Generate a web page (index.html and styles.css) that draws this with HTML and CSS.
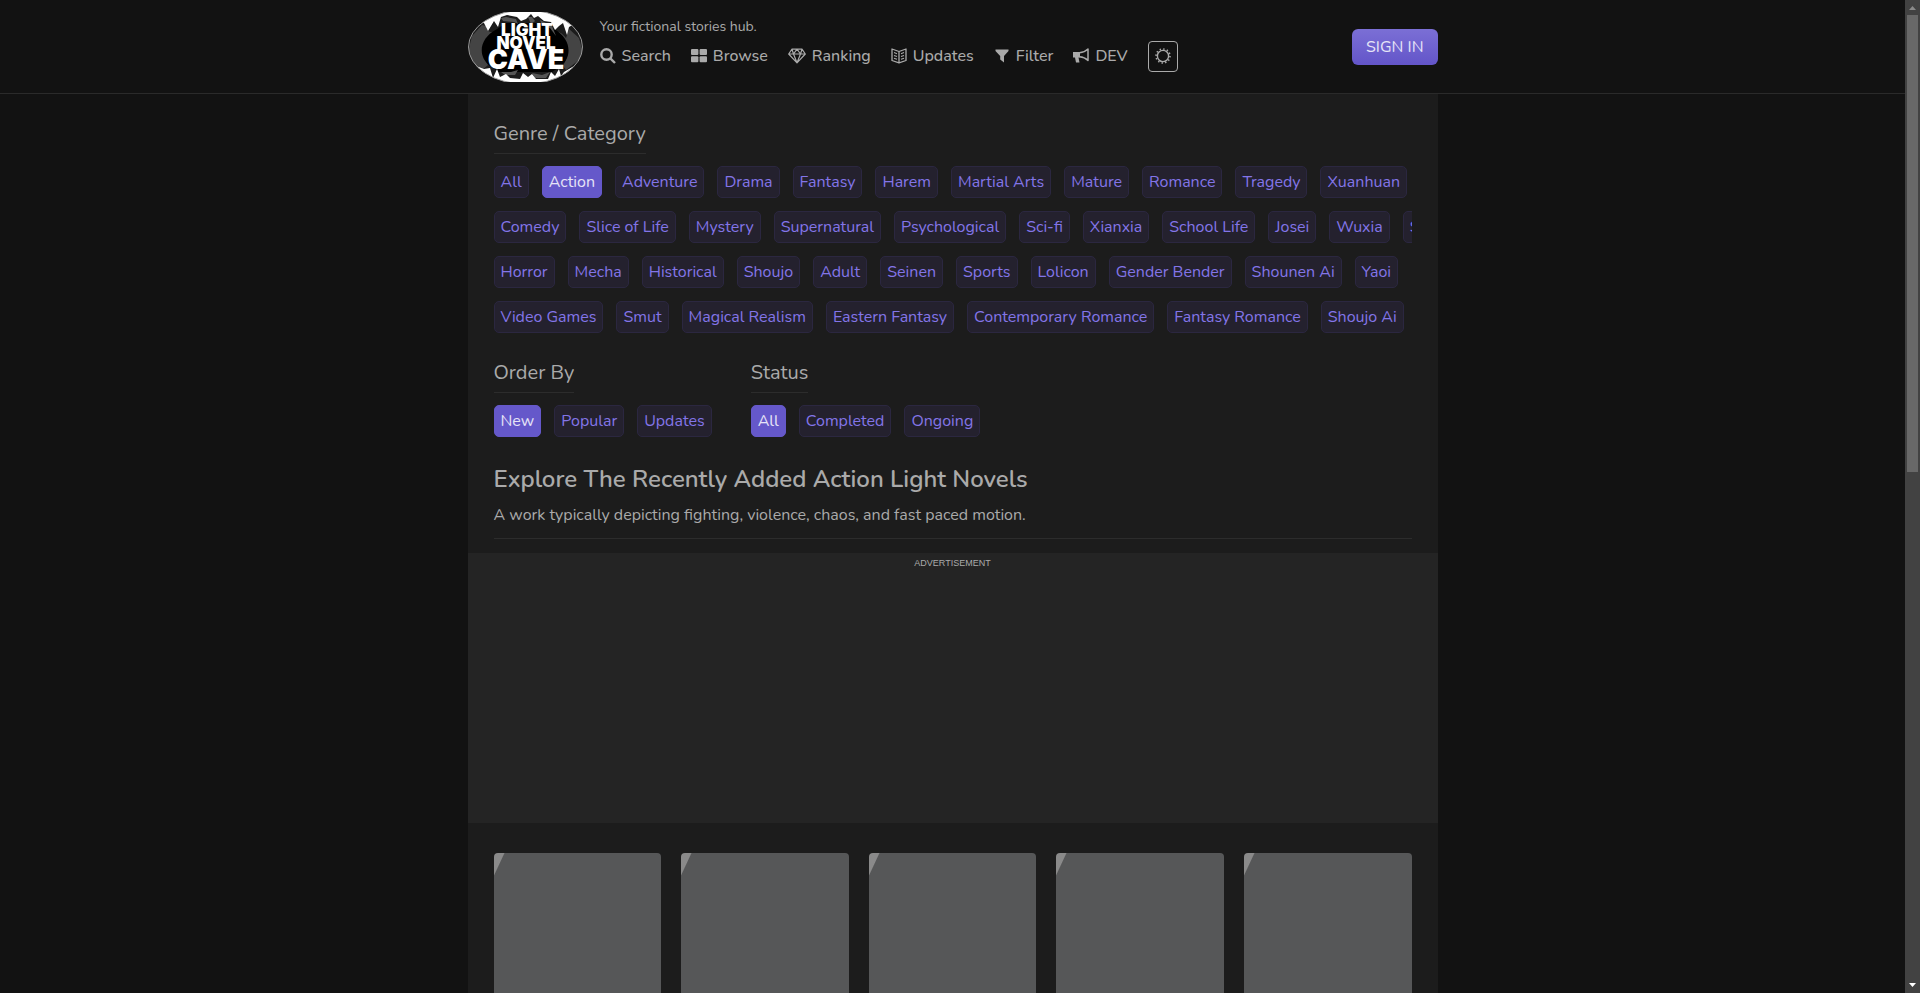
FILE: index.html
```html
<!DOCTYPE html>
<html lang="en">
<head>
<meta charset="utf-8">
<meta name="viewport" content="width=device-width, initial-scale=1">
<title>Action Light Novels | Light Novel Cave</title>
<link rel="stylesheet" href="styles.css">
</head>
<body>
<div class="page">
  <header class="site-header">
    <div class="container header-inner">
      <a class="logo" href="#" aria-label="Light Novel Cave">
        <svg viewBox="0 0 115 70" width="115" height="70">
          <defs><clipPath id="oval"><ellipse cx="57.500" cy="35" rx="57" ry="37"/></clipPath></defs>
          <g clip-path="url(#oval)">
            <rect width="115" height="70" fill="#1c1c1c"/>
            <path fill="#444" d="M0 40 4 24 14 13 18 14C19 20 22 20 25 20 15 29 14 42 20 53L14 58 4 52ZM115 40 111 26 101 17 98 26C95 22 92 20 90 20 101 29 102 42 95 54L98 58 111 48Z"/>
            <path fill="#000" d="M29 17 38 11H80L86 17C104 27 104 45 93 54L84 60H31L22 54C10 45 10 27 29 17Z"/>
            <path fill="#555" d="M33 6 38 5 48 7 50 12 46 10 35 9ZM60 5H64L67 9 63 12ZM72 8 80 12 84 14 88 24 82 16 74 13ZM33 60 43 60 50 58 47 63H37ZM64 61 74 63 82 60 78 66H67Z"/>
            <path fill="#fff" d="M10 10 22 0H94L106 12 101 15 99 23 95 11 91 14 87 18 83 10 76 9 70 4 66 6 63 2 58 7 53 9 49 5 39 3 33 5 30 15 26 9 20 19 16 11Z"/>
            <path fill="#fff" d="M8 54 16 57 22 56 25 66 29 57 32 65 38 62 42 66 52 67 55 61 60 65 64 62 68 67 80 67 83 60 87 64 91 57 93 64 96 60 106 54 94 70H24Z"/>
          </g>
          <ellipse cx="57.500" cy="35" rx="57" ry="37" fill="none" stroke="#999" stroke-width="1"/>
          <g class="logo-text" text-anchor="middle">
            <text x="59" y="24" font-size="17">LIGHT</text>
            <text x="58" y="37" font-size="17">NOVEL</text>
            <text x="58" y="57" font-size="27">CAVE</text>
          </g>
        </svg>
      </a>
      <div class="header-main">
        <p class="tagline">Your fictional stories hub.</p>
        <nav class="nav">
          <a href="#"><svg viewBox="0 0 16 16" fill="none" stroke="currentColor" stroke-width="2.400"><circle cx="6.500" cy="6.500" r="5.200"/><path d="M10.300 10.300 15 15"/></svg>Search</a>
          <a href="#"><svg viewBox="0 0 16 16" fill="currentColor"><rect y="1" width="7.400" height="6" rx="1"/><rect x="8.600" y="1" width="7.400" height="6" rx="1"/><rect y="8.200" width="7.400" height="6" rx="1"/><rect x="8.600" y="8.200" width="7.400" height="6" rx="1"/></svg>Browse</a>
          <a href="#"><svg class="wide" viewBox="0 0 18 16" fill="none" stroke="currentColor" stroke-width="1.200" stroke-linejoin="round"><path d="M4 1.200H14L17.300 6 9 14.800.7 6ZM.7 6H17.300M4 1.200 5.500 6 9 14.800 12.500 6 14 1.200M5.500 6 9 1.200 12.500 6"/></svg>Ranking</a>
          <a href="#"><svg viewBox="0 0 16 16" fill="none" stroke="currentColor" stroke-width="1.300" stroke-linejoin="round"><path d="M8 3.500 1 1V12.500L8 14.800 15 12.500V1ZM8 3.500V14.800"/><path stroke-width="1.100" d="M3 4.600 6 5.700M3 7.400 6 8.500M3 10.200 6 11.300M13 4.600 10 5.700M13 7.400 10 8.500M13 10.200 10 11.300"/></svg>Updates</a>
          <a href="#"><svg viewBox="0 0 16 16" fill="currentColor"><path d="M1.500 1.500H14.500V3L10 8V14.500L6.200 11.500V8L1.500 3Z"/></svg>Filter</a>
          <a href="#"><svg viewBox="0 0 16 16" fill="currentColor"><path d="M0 4H7V9.500H5.500L6.500 14.500H3L2 9.500H0Z"/><path fill="none" stroke="currentColor" stroke-width="1.500" stroke-linejoin="round" d="M6.500 4.800C10 4.500 13 3 15 1V12.500C13 10.500 10 9 6.500 8.800"/></svg>DEV</a>
          <button class="theme" type="button" aria-label="Theme"><svg viewBox="0 0 16 16" fill="none" stroke="currentColor"><circle cx="8" cy="8" r="5.600" stroke-width="1.400"/><circle cx="8" cy="8" r="7" stroke-width="1.600" stroke-dasharray="1.400 2.265"/></svg></button>
        </nav>
      </div>
      <button class="sign-in" type="button">SIGN IN</button>
    </div>
  </header>
  <main class="container main">
    <section class="filter">
      <h2>Genre / Category</h2>
      <div class="genres">
        <div class="chips"><a href="#">All</a><a class="active" href="#">Action</a><a href="#">Adventure</a><a href="#">Drama</a><a href="#">Fantasy</a><a href="#">Harem</a><a href="#">Martial Arts</a><a href="#">Mature</a><a href="#">Romance</a><a href="#">Tragedy</a><a href="#">Xuanhuan</a></div>
        <div class="chips"><a href="#">Comedy</a><a href="#">Slice of Life</a><a href="#">Mystery</a><a href="#">Supernatural</a><a href="#">Psychological</a><a href="#">Sci-fi</a><a href="#">Xianxia</a><a href="#">School Life</a><a href="#">Josei</a><a href="#">Wuxia</a><a href="#">Shounen</a></div>
        <div class="chips"><a href="#">Horror</a><a href="#">Mecha</a><a href="#">Historical</a><a href="#">Shoujo</a><a href="#">Adult</a><a href="#">Seinen</a><a href="#">Sports</a><a href="#">Lolicon</a><a href="#">Gender Bender</a><a href="#">Shounen Ai</a><a href="#">Yaoi</a></div>
        <div class="chips"><a href="#">Video Games</a><a href="#">Smut</a><a href="#">Magical Realism</a><a href="#">Eastern Fantasy</a><a href="#">Contemporary Romance</a><a href="#">Fantasy Romance</a><a href="#">Shoujo Ai</a></div>
      </div>
    </section>
    <div class="filter-pair">
      <section class="filter">
        <h2>Order By</h2>
        <div class="chips"><a class="active" href="#">New</a><a href="#">Popular</a><a href="#">Updates</a></div>
      </section>
      <section class="filter">
        <h2>Status</h2>
        <div class="chips"><a class="active" href="#">All</a><a href="#">Completed</a><a href="#">Ongoing</a></div>
      </section>
    </div>
    <div class="intro">
      <h1>Explore The Recently Added Action Light Novels</h1>
      <p>A work typically depicting fighting, violence, chaos, and fast paced motion.</p>
    </div>
    <aside class="ad">ADVERTISEMENT</aside>
    <div class="covers"><a href="#" aria-label="Novel"></a><a href="#" aria-label="Novel"></a><a href="#" aria-label="Novel"></a><a href="#" aria-label="Novel"></a><a href="#" aria-label="Novel"></a></div>
  </main>
</div>
<div class="scrollbar" aria-hidden="true">
  <svg viewBox="0 0 15 15"><path fill="#8a8a8a" d="M4 10H11L7.500 6Z"/></svg>
  <div class="track"><div class="thumb"></div></div>
  <svg viewBox="0 0 15 15"><path fill="#fff" d="M4 5H11L7.500 9Z"/></svg>
</div>
</body>
</html>
```
FILE: styles.css
```css
* { box-sizing: border-box; }
body {
  display: flex;
  height: 100vh;
  margin: 0;
  overflow: hidden;
  background: #121212;
  color: #aaa;
  font: 16px/24px Nunito, Lato, sans-serif;
}
h1, h2, p { margin: 0; font-weight: 400; }
a { color: inherit; text-decoration: none; }
button { font: inherit; cursor: pointer; }
.page { flex: 1; min-width: 0; }
.container { width: 100%; max-width: 970px; margin: 0 auto; }
.site-header { padding: 12px 0 11px; border-bottom: 1px solid #2a2a2a; }
.header-inner { display: flex; align-items: center; }
.logo, .logo svg { display: block; }
.logo-text { fill: #fff; font-family: Inter, sans-serif; font-weight: 900; }
.header-main { flex: 1; padding: 0 0 10px 17px; }
.tagline { font-size: 14px; line-height: 28px; }
.nav { display: flex; align-items: center; gap: 20px; font-weight: 500; }
.nav a { display: flex; align-items: center; gap: 6px; }
.nav svg { width: 16px; height: 16px; }
.nav .wide { width: 18px; }
.theme {
  display: grid;
  place-items: center;
  width: 30px;
  height: 31px;
  padding: 0;
  border: 1px solid #aaa;
  border-radius: 4px;
  background: none;
  color: inherit;
}
.sign-in {
  height: 36px;
  padding: 0 14px;
  border: 0;
  border-radius: 6px;
  background: linear-gradient(#7b6fd5, #6355c9);
  color: #e6e4f7;
}
.main { background: #1c1c1c; }
.filter { padding: 24px 26px 0; }
.filter h2 {
  width: fit-content;
  margin-bottom: 12px;
  padding-bottom: 3px;
  border-bottom: 1px solid #2c2c2c;
  font-size: 20px;
  line-height: 32px;
}
.genres { display: grid; gap: 13px; overflow: hidden; }
.chips { display: flex; gap: 13px; white-space: nowrap; }
.chips a {
  flex: none;
  padding: 3px 6px;
  border: 1px solid #2b2740;
  border-radius: 5px;
  background: #24212e;
  color: #8375e8;
}
.chips .active { border-color: #6558ca; background: #6558ca; color: #e6e4f7; }
.filter-pair { display: flex; }
.filter-pair .filter + .filter { padding-left: 13px; }
.intro { margin: 24px 26px 14px; padding-bottom: 11px; border-bottom: 1px solid #2c2c2c; }
.intro h1 { margin-bottom: 6px; font-size: 24px; font-weight: 600; line-height: 36px; }
.ad {
  height: 270px;
  background: #242424;
  font: 9px/20px "Liberation Sans", sans-serif;
  text-align: center;
}
.covers { display: grid; grid-template-columns: repeat(5, 1fr); gap: 20px; padding: 30px 26px; }
.covers a {
  aspect-ratio: 3 / 4;
  border-radius: 4px;
  background: linear-gradient(115deg, #8a8a8a 9px, #565758 10px);
}
.scrollbar { display: flex; flex-direction: column; width: 15px; background: #424242; }
.scrollbar svg { display: block; width: 15px; height: 15px; }
.track { flex: 1; padding: 0 2px; }
.thumb { height: 47.5%; background: #686868; }
```
